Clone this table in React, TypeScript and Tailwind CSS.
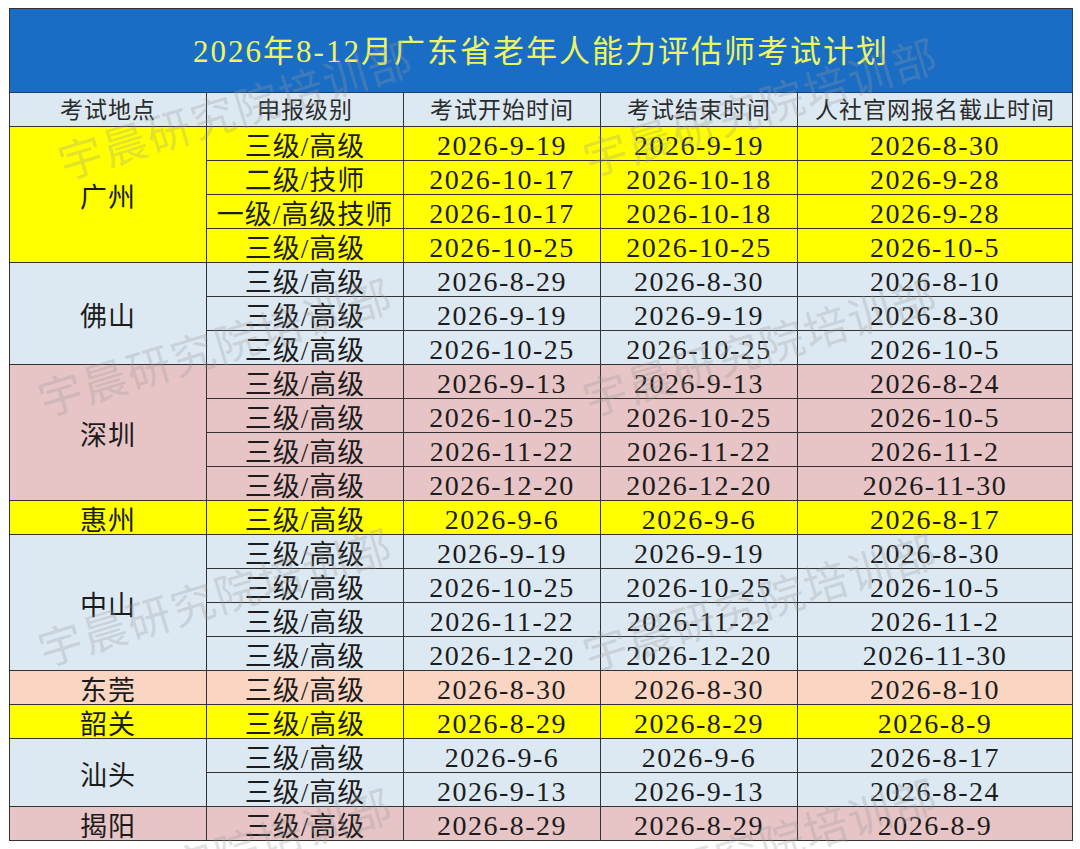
import React from "react";

type Row = { level: string; start: string; end: string; deadline: string };
type Group = { city: string; bg: string; span: string; rows: Row[] };

const L = "三级/高级";

const groups: Group[] = [
  {
    city: "广州",
    bg: "bg-[#ffff00]",
    span: "row-span-4",
    rows: [
      { level: L, start: "2026-9-19", end: "2026-9-19", deadline: "2026-8-30" },
      { level: "二级/技师", start: "2026-10-17", end: "2026-10-18", deadline: "2026-9-28" },
      { level: "一级/高级技师", start: "2026-10-17", end: "2026-10-18", deadline: "2026-9-28" },
      { level: L, start: "2026-10-25", end: "2026-10-25", deadline: "2026-10-5" },
    ],
  },
  {
    city: "佛山",
    bg: "bg-[#dde9f2]",
    span: "row-span-3",
    rows: [
      { level: L, start: "2026-8-29", end: "2026-8-30", deadline: "2026-8-10" },
      { level: L, start: "2026-9-19", end: "2026-9-19", deadline: "2026-8-30" },
      { level: L, start: "2026-10-25", end: "2026-10-25", deadline: "2026-10-5" },
    ],
  },
  {
    city: "深圳",
    bg: "bg-[#e7c4c5]",
    span: "row-span-4",
    rows: [
      { level: L, start: "2026-9-13", end: "2026-9-13", deadline: "2026-8-24" },
      { level: L, start: "2026-10-25", end: "2026-10-25", deadline: "2026-10-5" },
      { level: L, start: "2026-11-22", end: "2026-11-22", deadline: "2026-11-2" },
      { level: L, start: "2026-12-20", end: "2026-12-20", deadline: "2026-11-30" },
    ],
  },
  {
    city: "惠州",
    bg: "bg-[#ffff00]",
    span: "row-span-1",
    rows: [{ level: L, start: "2026-9-6", end: "2026-9-6", deadline: "2026-8-17" }],
  },
  {
    city: "中山",
    bg: "bg-[#dde9f2]",
    span: "row-span-4",
    rows: [
      { level: L, start: "2026-9-19", end: "2026-9-19", deadline: "2026-8-30" },
      { level: L, start: "2026-10-25", end: "2026-10-25", deadline: "2026-10-5" },
      { level: L, start: "2026-11-22", end: "2026-11-22", deadline: "2026-11-2" },
      { level: L, start: "2026-12-20", end: "2026-12-20", deadline: "2026-11-30" },
    ],
  },
  {
    city: "东莞",
    bg: "bg-[#f9d5c2]",
    span: "row-span-1",
    rows: [{ level: L, start: "2026-8-30", end: "2026-8-30", deadline: "2026-8-10" }],
  },
  {
    city: "韶关",
    bg: "bg-[#ffff00]",
    span: "row-span-1",
    rows: [{ level: L, start: "2026-8-29", end: "2026-8-29", deadline: "2026-8-9" }],
  },
  {
    city: "汕头",
    bg: "bg-[#dde9f2]",
    span: "row-span-2",
    rows: [
      { level: L, start: "2026-9-6", end: "2026-9-6", deadline: "2026-8-17" },
      { level: L, start: "2026-9-13", end: "2026-9-13", deadline: "2026-8-24" },
    ],
  },
  {
    city: "揭阳",
    bg: "bg-[#e7c4c5]",
    span: "row-span-1",
    rows: [{ level: L, start: "2026-8-29", end: "2026-8-29", deadline: "2026-8-9" }],
  },
];

const cell =
  "flex items-center justify-center border-r border-b border-[#333333] text-[#1c1c1c] leading-none whitespace-nowrap";
const dateCls = "text-[28px] tracking-[1.5px] pt-[5px]";
const zhCls = "text-[27px] tracking-[1px] pt-[7px]";

const headers = ["考试地点", "申报级别", "考试开始时间", "考试结束时间", "人社官网报名截止时间"];

const marks = [
  "left-[235px] top-[108px]",
  "left-[760px] top-[105px]",
  "left-[215px] top-[345px]",
  "left-[760px] top-[345px]",
  "left-[215px] top-[595px]",
  "left-[760px] top-[600px]",
  "left-[215px] top-[855px]",
  "left-[760px] top-[845px]",
];

export default function App() {
  return (
    <div
      className="relative w-[1080px] h-[849px] overflow-hidden bg-white pt-[8px] pl-[9px]"
      style={{ fontFamily: "'Liberation Serif', 'Noto Sans CJK SC', serif" }}
    >
      <div className="grid grid-cols-[197px_197px_197px_197px_275px] grid-rows-[84px] auto-rows-[34px] border-l border-t border-[#333333] w-[1064px]">
        <div className="col-span-5 flex items-center justify-center bg-[#1a6dc4] border-r border-b border-[#24406e] text-[31px] tracking-[2px] text-[#eef560] leading-none pt-[1px]">
          2026年8-12月广东省老年人能力评估师考试计划
        </div>
        {headers.map((h) => (
          <div key={h} className={`${cell} bg-[#dde9f2] text-[23px] tracking-[1px] text-[#2b2b2b] pt-[2px]`}>
            {h}
          </div>
        ))}
        {groups.map((g) => (
          <React.Fragment key={g.city}>
            <div className={`${cell} ${g.bg} ${g.span} col-start-1 ${zhCls}`}>{g.city}</div>
            {g.rows.map((r, i) => (
              <React.Fragment key={i}>
                <div className={`${cell} ${g.bg} col-start-2 ${zhCls}`}>{r.level}</div>
                <div className={`${cell} ${g.bg} ${dateCls}`}>{r.start}</div>
                <div className={`${cell} ${g.bg} ${dateCls}`}>{r.end}</div>
                <div className={`${cell} ${g.bg} ${dateCls}`}>{r.deadline}</div>
              </React.Fragment>
            ))}
          </React.Fragment>
        ))}
      </div>
      {marks.map((m) => (
        <div
          key={m}
          className={`pointer-events-none absolute ${m} -translate-x-1/2 -translate-y-1/2 rotate-[-17deg] whitespace-nowrap text-[44px] tracking-[2px] text-[#9a9a9a]/30 leading-none`}
          style={{ fontFamily: "'Noto Sans CJK SC', sans-serif" }}
        >
          宇晨研究院培训部
        </div>
      ))}
    </div>
  );
}
